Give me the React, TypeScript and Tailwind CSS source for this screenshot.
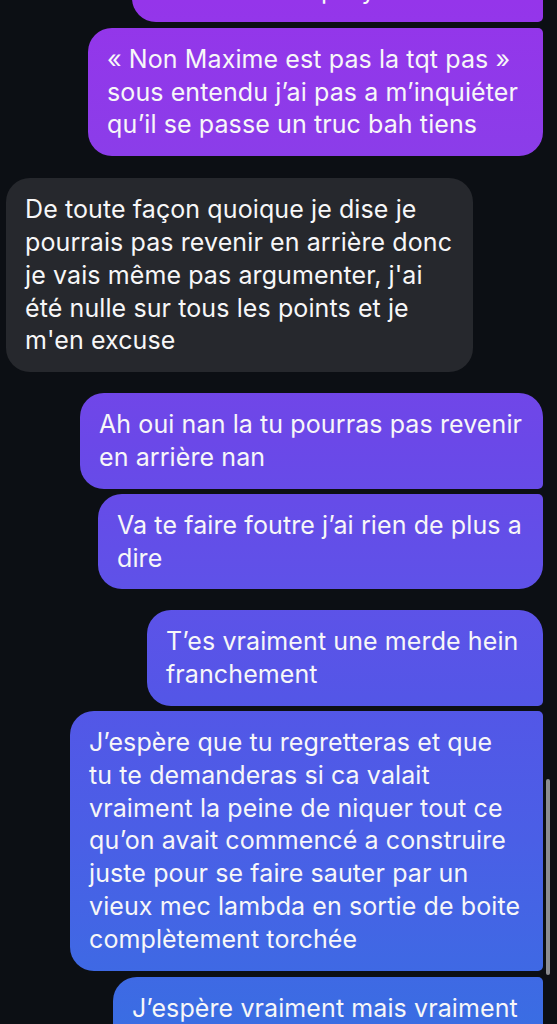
type Msg = {
  lines: string[];
  mine: boolean;
  width: string;
  shape: string;
  gap: string;
};

const msgs: Msg[] = [
  {
    lines: ["« Non Maxime est pas la tqt pas »", "sous entendu j’ai pas a m’inquiéter", "qu’il se passe un truc bah tiens"],
    mine: true,
    width: "w-[455px]",
    shape: "rounded-[24px] rounded-tr-[5px]",
    gap: "mt-[6px]",
  },
  {
    lines: [
      "De toute façon quoique je dise je",
      "pourrais pas revenir en arrière donc",
      "je vais même pas argumenter, j'ai",
      "été nulle sur tous les points et je",
      "m'en excuse",
    ],
    mine: false,
    width: "w-[467px]",
    shape: "rounded-[24px]",
    gap: "mt-[22px]",
  },
  {
    lines: ["Ah oui nan la tu pourras pas revenir", "en arrière nan"],
    mine: true,
    width: "w-[463px]",
    shape: "rounded-[24px] rounded-br-[5px]",
    gap: "mt-[21px]",
  },
  {
    lines: ["Va te faire foutre j’ai rien de plus a", "dire"],
    mine: true,
    width: "w-[445px]",
    shape: "rounded-[24px] rounded-tr-[5px]",
    gap: "mt-[5px]",
  },
  {
    lines: ["T’es vraiment une merde hein", "franchement"],
    mine: true,
    width: "w-[396px]",
    shape: "rounded-[24px] rounded-br-[5px]",
    gap: "mt-[21px]",
  },
  {
    lines: [
      "J’espère que tu regretteras et que",
      "tu te demanderas si ca valait",
      "vraiment la peine de niquer tout ce",
      "qu’on avait commencé a construire",
      "juste pour se faire sauter par un",
      "vieux mec lambda en sortie de boite",
      "complètement torchée",
    ],
    mine: true,
    width: "w-[473px]",
    shape: "rounded-[24px] rounded-r-[5px]",
    gap: "mt-[5px]",
  },
  {
    lines: ["J’espère vraiment mais vraiment", "que tu vas le regretter"],
    mine: true,
    width: "w-[430px]",
    shape: "rounded-[24px] rounded-tr-[5px]",
    gap: "mt-[6px]",
  },
];

const sent =
  "bg-[linear-gradient(180deg,#9535ea_0%,#8b3de9_15%,#6b48e8_43%,#5e52e8_58%,#5456e7_68%,#4a5fe6_82%,#3a6de3_100%)] bg-fixed";

function Bubble({ m }: { m: Msg }) {
  return (
    <div
      className={`${m.gap} ${m.width} ${m.shape} ${
        m.mine ? `self-end ${sent}` : "self-start ml-[6px] bg-[#26282d]"
      } px-[19px] py-[15px] text-[#f7f7f8] whitespace-nowrap`}
    >
      {m.lines.map((l, i) => (
        <div key={i}>{l}</div>
      ))}
    </div>
  );
}

export default function App() {
  return (
    <div
      className="relative h-[1024px] overflow-hidden bg-[#0c0f14] text-[25px] leading-[32.8px] tracking-[0.1px]"
      style={{ fontFamily: "Inter, 'Noto Sans', sans-serif" }}
    >
      <div className="flex flex-col pr-[14px]">
        {/* bubble cut off by the top edge */}
        <div
          className={`-mt-[41px] w-[411px] self-end rounded-[24px] rounded-br-[5px] ${sent} px-[19px] py-[15px] text-[#f7f7f8] whitespace-nowrap`}
        >
          <span className="pl-[170px]">p</span>
          <span className="pl-[25px]">y</span>
        </div>
        {msgs.map((m, i) => (
          <Bubble key={i} m={m} />
        ))}
      </div>

      {/* scroll indicator */}
      <div className="absolute right-[7px] top-[779px] h-[196px] w-[4px] rounded-full bg-[#8b8c90]" />
    </div>
  );
}
